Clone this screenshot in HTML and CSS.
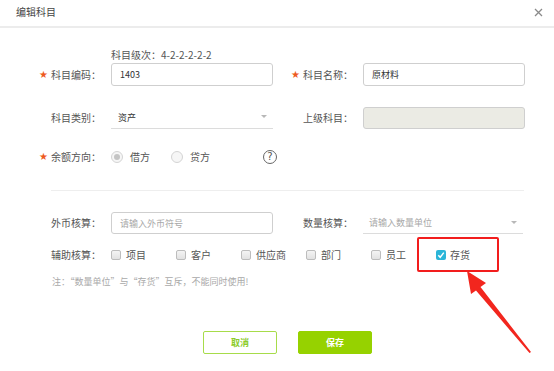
FILE: index.html
```html
<!DOCTYPE html>
<html lang="zh-CN">

<head>
  <meta charset="UTF-8">
  <title>编辑科目</title>
  <link rel="stylesheet" href="styles.css">
</head>

<body>

  <!-- Dialog header -->
  <div class="dialog-header">
    <span class="dialog-title">编辑科目</span>
    <svg class="close-icon" width="9" height="9" viewBox="0 0 9 9">
      <path d="M1 1L8 8M8 1L1 8" stroke="#8a8a8a" stroke-width="1.3" />
    </svg>
  </div>

  <!-- Form -->
  <div class="form">
    <div class="hint">科目级次：4-2-2-2-2-2</div>

    <div class="row row-first">
      <div class="field">
        <span class="star">★</span>
        <span class="label">科目编码：</span>
        <div class="input">1403</div>
      </div>
      <div class="field field-right">
        <span class="star">★</span>
        <span class="label">科目名称：</span>
        <div class="input">原材料</div>
      </div>
    </div>

    <div class="row row-second">
      <div class="field">
        <span class="star"></span>
        <span class="label">科目类别：</span>
        <div class="select">资产<span class="caret"></span></div>
      </div>
      <div class="field field-right">
        <span class="star"></span>
        <span class="label">上级科目：</span>
        <div class="input input-disabled"></div>
      </div>
    </div>

    <div class="row row-third">
      <div class="field">
        <span class="star">★</span>
        <span class="label">余额方向：</span>
        <div class="radio-group">
          <span class="radio-option"><span class="radio radio-on"></span>借方</span>
          <span class="radio-option"><span class="radio"></span>贷方</span>
          <span class="help">?</span>
        </div>
      </div>
    </div>

    <div class="divider"></div>

    <div class="row row-fourth">
      <div class="field">
        <span class="star"></span>
        <span class="label">外币核算：</span>
        <div class="input placeholder">请输入外币符号</div>
      </div>
      <div class="field field-right">
        <span class="star"></span>
        <span class="label">数量核算：</span>
        <div class="select placeholder">请输入数量单位<span class="caret"></span></div>
      </div>
    </div>

    <div class="row row-fifth">
      <span class="star"></span>
      <span class="label">辅助核算：</span>
      <div class="checks">
        <span class="check-item"><span class="box"></span>项目</span>
        <span class="check-item"><span class="box"></span>客户</span>
        <span class="check-item"><span class="box"></span>供应商</span>
        <span class="check-item"><span class="box"></span>部门</span>
        <span class="check-item"><span class="box"></span>员工</span>
        <span class="check-item"><span class="box box-on">
            <svg width="10" height="10" viewBox="0 0 10 10">
              <path d="M2.3 5.2L4.2 7.3L7.8 2.6" fill="none" stroke="#fff" stroke-width="1.4" />
            </svg>
          </span>存货</span>
      </div>
    </div>

    <div class="note">注：“数量单位”与“存货”互斥，不能同时使用!</div>

    <div class="buttons">
      <button class="btn btn-cancel">取消</button>
      <button class="btn btn-save">保存</button>
    </div>
  </div>

  <!-- Annotation: red frame and arrow -->
  <div class="mark-box"></div>
  <svg class="mark-arrow" width="554" height="371" viewBox="0 0 554 371">
    <polygon points="467,271 486,283 480.5,287 531,352 529.5,353 476,290.5 471,294" fill="#f2261e" />
  </svg>

</body>

</html>
```

FILE: styles.css
```css
/* Reset */
* {
  margin: 0;
  padding: 0;
  box-sizing: border-box;
}

body {
  width: 554px;
  height: 371px;
  background: #fff;
  font-family: "Noto Sans CJK SC", "Noto Sans", sans-serif;
  font-size: 10px;
  color: #555;
  position: relative;
  overflow: hidden;
}

/* Header */
.dialog-header {
  height: 28px;
  border-bottom: 2px solid #ececec;
  display: flex;
  align-items: center;
  justify-content: space-between;
  padding: 0 11px 2px 16px;
}

.dialog-title {
  font-size: 10px;
  color: #444;
  line-height: 14px;
}

/* Form */
.form {
  padding: 21px 0 0 39px;
}

.hint {
  margin-left: 72px;
  font-size: 10px;
  line-height: 12px;
  color: #555;
}

.row {
  display: flex;
  align-items: center;
}

.row-first {
  margin-top: 2px;
  height: 23px;
}

.row-second {
  margin-top: 20px;
  height: 23px;
}

.row-third {
  margin-top: 17px;
  height: 22px;
}

.row-fourth {
  margin-top: 21px;
  height: 22px;
}

.row-fifth {
  margin-top: 11px;
  height: 20px;
}

.field {
  display: flex;
  align-items: center;
  height: 100%;
}

.field-right {
  margin-left: 18px;
}

.star {
  width: 12px;
  font-size: 10px;
  line-height: 12px;
  color: #ee5a1e;
  font-family: "DejaVu Sans", sans-serif;
}

.label {
  width: 60px;
  line-height: 14px;
  color: #555;
}

.input {
  width: 162px;
  height: 100%;
  border: 1px solid #cfcfcf;
  border-radius: 3px;
  padding-left: 8px;
  display: flex;
  align-items: center;
  font-size: 9px;
  color: #333;
}

.input-disabled {
  background: #ebebe4;
  height: 22px;
}

.placeholder {
  color: #a8a8a8;
}

.select {
  width: 162px;
  height: 100%;
  border-bottom: 1px solid #dcdcdc;
  padding-left: 7px;
  display: flex;
  align-items: center;
  font-size: 9px;
  color: #333;
  position: relative;
}

.select.placeholder {
  color: #a8a8a8;
  width: 160px;
  padding-left: 6px;
}

.caret {
  position: absolute;
  right: 6px;
  top: 9px;
  border-left: 3px solid transparent;
  border-right: 3px solid transparent;
  border-top: 3px solid #b8b8b8;
}

/* Radios */
.radio-group {
  display: flex;
  align-items: center;
}

.radio-option {
  width: 60px;
  display: flex;
  align-items: center;
  line-height: 14px;
  color: #555;
}

.radio {
  width: 12px;
  height: 12px;
  border: 1px solid #d4d4d4;
  border-radius: 50%;
  background: #f6f6f6;
  margin-right: 7px;
  display: flex;
  align-items: center;
  justify-content: center;
}

.radio-on::after {
  content: "";
  width: 6px;
  height: 6px;
  border-radius: 50%;
  background: #c4c4c4;
}

.help {
  margin-left: 32px;
  width: 14px;
  height: 14px;
  border: 1px solid #666;
  border-radius: 50%;
  font-size: 10px;
  line-height: 12px;
  text-align: center;
  color: #555;
  font-family: "DejaVu Sans", sans-serif;
}

.divider {
  margin: 22px 30px 0 12px;
  height: 1px;
  background: #eeeeee;
}

/* Checkboxes */
.checks {
  display: flex;
  align-items: center;
}

.check-item {
  width: 65px;
  display: flex;
  align-items: center;
  line-height: 14px;
  color: #555;
}

.box {
  width: 10px;
  height: 10px;
  border: 1px solid #bdbdbd;
  border-radius: 2px;
  background: linear-gradient(#f4f4f4, #e2e2e2);
  margin-right: 5px;
}

.box-on {
  border: none;
  background: #2bb5d8;
  margin-right: 4px;
}

.box-on svg {
  display: block;
}

.note {
  margin: 10px 0 0 13px;
  font-size: 9px;
  line-height: 14px;
  color: #a9a9a9;
}

/* Buttons */
.buttons {
  display: flex;
  gap: 21px;
  margin: 42px 0 0 164px;
}

.btn {
  width: 74px;
  height: 23px;
  border-radius: 2px;
  font-family: "Noto Sans CJK SC", sans-serif;
  font-size: 9px;
  font-weight: bold;
}

.btn-cancel {
  background: #fff;
  border: 1px solid #a7dc4a;
  color: #8ccc2a;
}

.btn-save {
  background: #96d200;
  border: 1px solid #96d200;
  color: #fff;
}

/* Annotation overlay */
.mark-box {
  position: absolute;
  left: 417px;
  top: 237px;
  width: 82px;
  height: 35px;
  border: 2px solid #f21d1d;
  border-radius: 2px;
}

.mark-arrow {
  position: absolute;
  left: 0;
  top: 0;
}
```
